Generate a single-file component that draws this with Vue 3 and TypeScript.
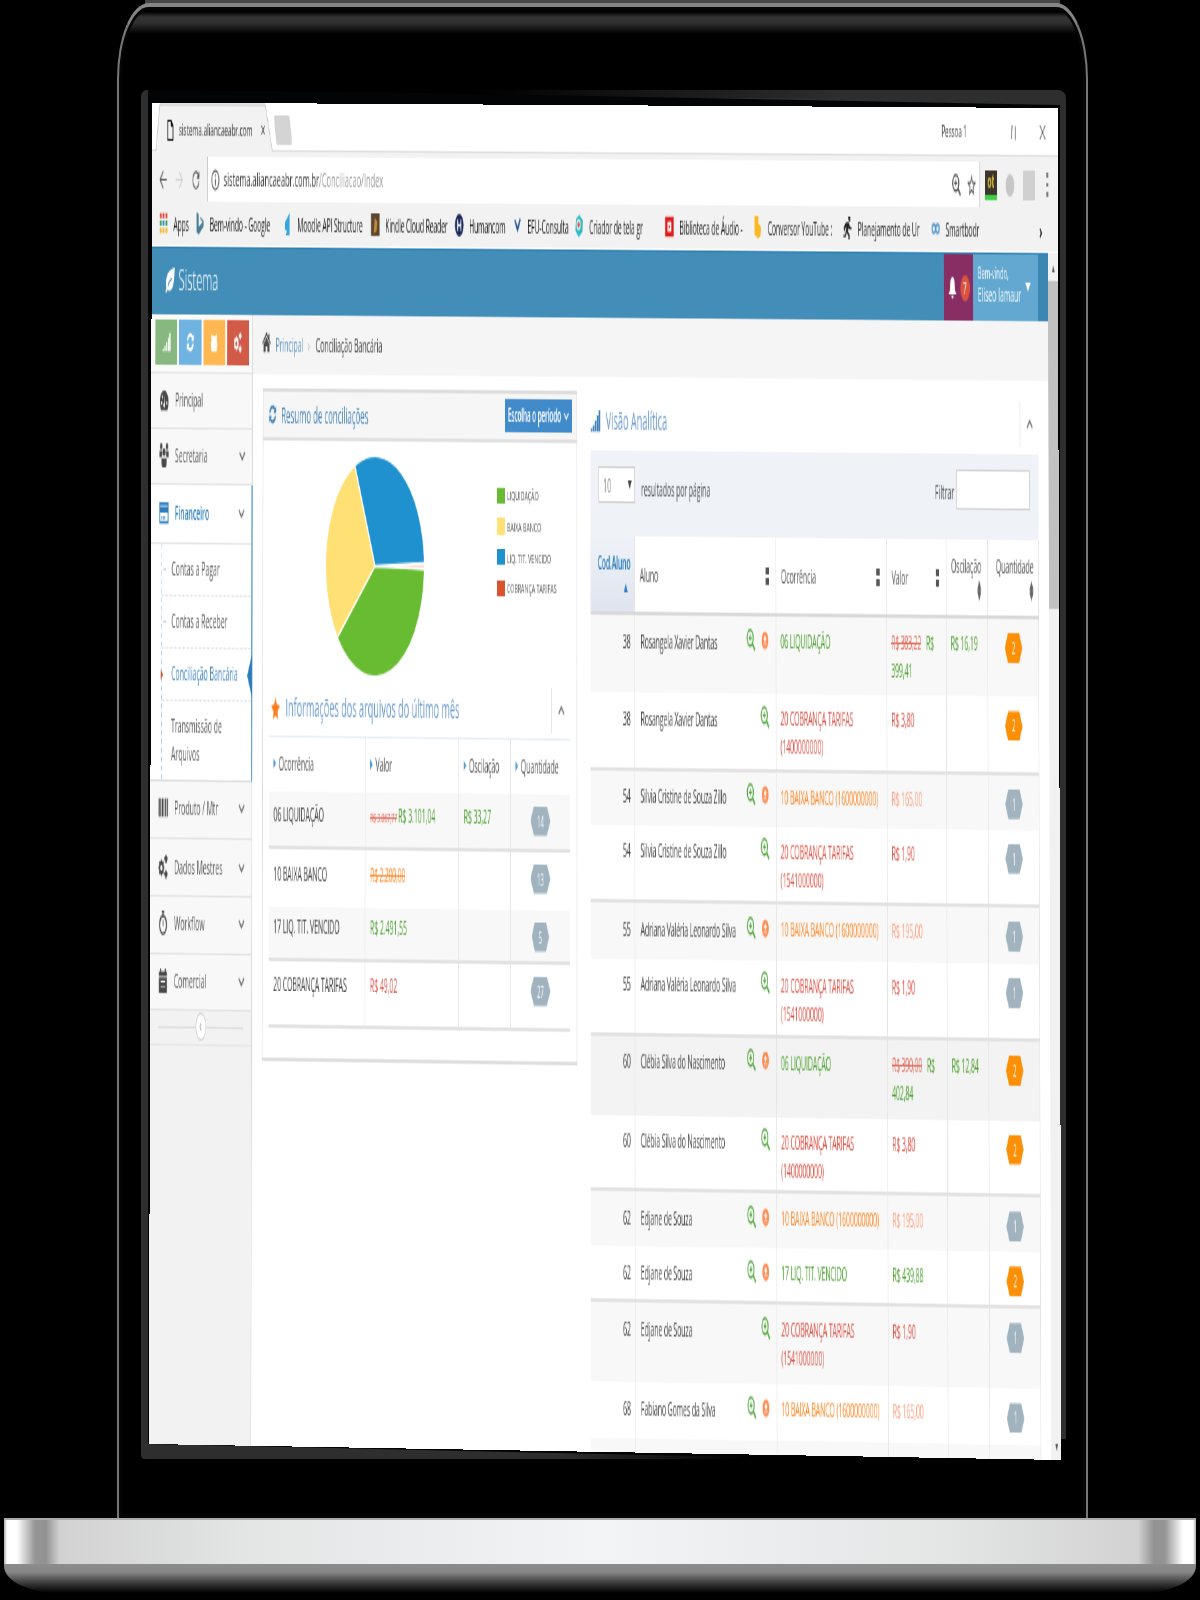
<script setup lang="ts">
interface MenuItem { icon: string; label: string; height: number; arrow: boolean }
interface Row {
  code: string; name: string; both: boolean; tone: string; text: string
  old?: string; value: string; diff?: string; qty: number; h: number; bg: string; line?: boolean
}

const icons: Record<string, string> = {
  leaf: 'M15 1C8 2 3 4 2 9c-.3 2 0 3 .6 4L1 15l1 .8L4 14c5 1.500 9-1 10-6 .5-2 .8-5 1-7zM4.500 11C6 9 8 7.500 11 7v1C8.500 8.500 6.500 10 5 12z',
  home: 'M8 1 0 8.500l1.200 1L8 3.500l6.800 6 1.200-1-2.500-2.300V2h-2v2.300zM2.500 9.500V15H6.500v-4h3v4h4V9.500L8 4.700z',
  dash: 'M8 2a7.500 7.500 0 0 0-7.500 7.500c0 2 .8 4 2 5.500h11c1.200-1.500 2-3.500 2-5.500A7.500 7.500 0 0 0 8 2zM3.500 11.500a1.200 1.200 0 1 1 0-2.400 1.200 1.200 0 0 1 0 2.400zm1.500-4a1.200 1.200 0 1 1 0-2.400 1.200 1.200 0 0 1 0 2.400zM8 13.500a1.700 1.700 0 0 1-.6-3.200L8 5l.8 5.300A1.700 1.700 0 0 1 8 13.500zm4.500-2a1.200 1.200 0 1 1 0-2.400 1.200 1.200 0 0 1 0 2.400z',
  group: 'M8 3.500a2.600 2.600 0 1 1 0 5.200 2.600 2.600 0 0 1 0-5.200zM3 0a2.200 2.200 0 1 1 0 4.400A2.200 2.200 0 0 1 3 0zm10 0a2.200 2.200 0 1 1 0 4.400A2.200 2.200 0 0 1 13 0zM0 5h4.500v3L3.500 9.500H0zm11.500 0H16v4.500h-3.500L11.500 8zM3.500 10h9v4l-1.500 2H5l-1.500-2z',
  card: 'M0 1h16v14H0zM1.500 3v1h13V3zM1.500 8v5.500h13V8zM3 10.500h2v1.500H3zm3 0h4v1.500H6z',
  bars: 'M0 2h2v12H0zM3 2h1v12H3zM5 2h3v12H5zM9 2h1v12H9zM11 2h2v12h-2zM14 2h2v12h-2z',
  gears: 'M4 3h2l.4 1.700 1.500-.7 1.400 1.500-.8 1.500 1.500.5v2l-1.600.5.8 1.500-1.400 1.400-1.500-.7L6 14H4l-.5-1.700-1.600.8L.500 11.600l.8-1.500L0 9.500v-2L1.300 7 .6 5.500 2 4l1.500.7zM5 6.500a2 2 0 1 0 0 4 2 2 0 0 0 0-4zM12 0h1.500l.4 1.200 1.600.3v2l-1.400.8-.5 1.400H12l-.5-1.400L10 3.500v-2l1.600-.3zM12 10h1.500l.4 1.200 1.600.3v2l-1.400.8-.5 1.400H12l-.5-1.400-1.500-.8v-2l1.600-.3z',
  clock: 'M6 0h4v1.500H9v1a6.700 6.700 0 1 1-2 0v-1H6zM8 4.300a5 5 0 1 0 0 10 5 5 0 0 0 0-10zM7.300 6h1.500v4H7.300z',
  calendar: 'M3 0h2v2h6V0h2v2h2v3H1V2h2zM1 6h14v10H1zM4 8v1h8V8zm0 4v.600h8v-.600z',
  signal: 'M0 13h2.500v2H0zM3.500 11H6v4H3.500zM7 8h2.500v7H7zM10.500 4.500H13V15h-2.500zM13.500 1H16v14h-2.500z',
  refresh: 'M8 1c2 0 4 .8 5.200 2.200L15 1.500V7H9.500l2-2A5 5 0 0 0 3.400 7H1.200A7 7 0 0 1 8 1zM1 9h5.500l-2 2a5 5 0 0 0 8-2h2.300A7 7 0 0 1 2.800 12.800L1 14.500z',
  cube: 'M3 1l2 2h6l2-2 1 3-1 2 2 3-2 6H3L1 9l2-3-1-2z',
  star: 'M8 0l2.400 5.300 5.600.7-4.200 4L13 16l-5-3-5 3 1.200-6L0 6l5.600-.7z',
  bell: 'M8 1c2.500.5 3.800 2.500 4 5l.5 4 2 2.500h-13l2-2.500L4 6c.2-2.500 1.500-4.500 4-5zM6 13.500h4a2 2 0 0 1-4 0z',
  zoom: 'M6.500 0a6.500 6.500 0 0 1 5.300 10.200L16 14.500 14.500 16l-4.200-4.200A6.500 6.500 0 1 1 6.500 0zm0 1.800a4.700 4.700 0 1 0 0 9.400 4.700 4.700 0 0 0 0-9.400zM5.800 4h1.500v1.800H9v1.500H7.300V9H5.800V7.300H4V5.800h1.800z',
  eye: 'M8 2a6.200 6.200 0 1 1 0 12.400A6.200 6.200 0 0 1 8 2zm0 2.200L4.800 7.800h2v1.500h2.400V7.800h2zM5 10.500v1h6v-1z',
  file: 'M2 0h8l4 4v12H2zm1.300 1.300v13.400h9.400V5H9V1.300z',
  back: 'M8 1.500 1.500 8 8 14.500l1-1L4.200 8.700H15V7.300H4.200L9 2.500z',
  forward: 'M8 1.500 14.500 8 8 14.500l-1-1 4.800-4.800H1V7.300h10.800L7 2.500z',
  reload: 'M8 1.500c1.800 0 3.500.8 4.700 2L14.500 1.800V7H9.300l2.300-2.300a5 5 0 1 0 1.300 4.300h1.600A6.500 6.500 0 1 1 8 1.500z',
  info: 'M8 .5a7.500 7.500 0 1 1 0 15 7.500 7.500 0 0 1 0-15zM8 2a6 6 0 1 0 0 12A6 6 0 0 0 8 2zM7.200 4h1.600v1.600H7.200zm0 3h1.600v5H7.200z',
  fav: 'M8 0l2.200 5.500 5.800.4-4.500 3.800L13 15.500l-5-3.200-5 3.200 1.500-5.800L0 5.900l5.800-.4zM8 3.500 6.700 6.800l-3.200.3L6 9.200l-.8 3L8 10.500l2.800 1.700-.8-3 2.500-2.100-3.200-.3z',
  runner: 'M9 0h4v3.500H10zM5 4h5l2 3 3 .5v1.500h-4L9.500 8 8.500 10.500l3 2V16H9.500v-2.500L6 11.500 4 14.500H0V13h3L6 7 3 8.500V10H1V7z',
}

const shortcuts = [
  { icon: 'signal', cls: 'green' }, { icon: 'refresh', cls: 'sky' },
  { icon: 'cube', cls: 'amber' }, { icon: 'gears', cls: 'brick' },
]
const menuTop: MenuItem[] = [
  { icon: 'dash', label: 'Principal', height: 32, arrow: false },
  { icon: 'group', label: 'Secretaria', height: 32, arrow: true },
]
const menuBottom: MenuItem[] = [
  { icon: 'bars', label: 'Produto / Mtr', height: 33.5, arrow: true },
  { icon: 'gears', label: 'Dados Mestres', height: 33, arrow: true },
  { icon: 'clock', label: 'Workflow', height: 32.5, arrow: true },
  { icon: 'calendar', label: 'Comercial', height: 32, arrow: true },
]
const bookmarks = [
  { k: 'apps', t: 'Apps', w: 55 }, { k: 'bing', t: 'Bem-vindo - Google', w: 133 },
  { k: 'moodle', t: 'Moodle API Structure', w: 133 }, { k: 'kindle', t: 'Kindle Cloud Reader', w: 127 },
  { k: 'hh', t: 'Humancom', w: 88 }, { k: 'vv', t: 'EFU-Consulta', w: 93 },
  { k: 'teal', t: 'Criador de tela gr', w: 136 }, { k: 'yt', t: 'Biblioteca de Áudio -', w: 133 },
  { k: 'hand', t: 'Conversor YouTube :', w: 135 }, { k: 'run', t: 'Planejamento de Ur', w: 132 },
  { k: 'oo', t: 'Smartbodr', w: 100 },
]
const legend = [
  { c: 'lg', t: 'LIQUIDAÇÃO' }, { c: 'ly', t: 'BAIXA BANCO' },
  { c: 'lb', t: 'LIQ. TIT. VENCIDO' }, { c: 'lr', t: 'COBRANÇA TARIFAS' },
]
const summary = [
  { t: '06 LIQUIDAÇÃO', old: 'R$ 3.067,77', v: 'R$ 3.101,04', tone: 'ok', d: 'R$ 33,27', q: 14, cls: 'r1' },
  { t: '10 BAIXA BANCO', old: '', v: 'R$ 2.200,00', tone: 'warn cut', d: '', q: 13, cls: 'r2' },
  { t: '17 LIQ. TIT. VENCIDO', old: '', v: 'R$ 2.491,55', tone: 'ok', d: '', q: 5, cls: 'r3' },
  { t: '20 COBRANÇA TARIFAS', old: '', v: 'R$ 49,02', tone: 'bad', d: '', q: 27, cls: 'r4' },
]
const rows: Row[] = [
  { code: '38', name: 'Rosangela Xavier Dantas', both: true, tone: 'ok', text: '06 LIQUIDAÇÃO', old: 'R$ 383,22', value: 'R$ 399,41', diff: 'R$ 16,19', qty: 2, h: 44.4, bg: 'g1' },
  { code: '38', name: 'Rosangela Xavier Dantas', both: false, tone: 'bad', text: '20 COBRANÇA TARIFAS (1400000000)', value: 'R$ 3,80', qty: 2, h: 44.3, bg: '', line: true },
  { code: '54', name: 'Silvia Cristine de Souza Zillo', both: true, tone: 'warn', text: '10 BAIXA BANCO (1600000000)', value: 'R$ 165,00', qty: 1, h: 31.1, bg: 'g1' },
  { code: '54', name: 'Silvia Cristine de Souza Zillo', both: false, tone: 'bad', text: '20 COBRANÇA TARIFAS (1541000000)', value: 'R$ 1,90', qty: 1, h: 44.3, bg: '', line: true },
  { code: '55', name: 'Adriana Valéria Leonardo Silva', both: true, tone: 'warn', text: '10 BAIXA BANCO (1600000000)', value: 'R$ 195,00', qty: 1, h: 31.8, bg: 'g1' },
  { code: '55', name: 'Adriana Valéria Leonardo Silva', both: false, tone: 'bad', text: '20 COBRANÇA TARIFAS (1541000000)', value: 'R$ 1,90', qty: 1, h: 44.1, bg: '', line: true },
  { code: '60', name: 'Clébia Silva do Nascimento', both: true, tone: 'ok', text: '06 LIQUIDAÇÃO', old: 'R$ 390,00', value: 'R$ 402,84', diff: 'R$ 12,84', qty: 2, h: 44.6, bg: 'g2' },
  { code: '60', name: 'Clébia Silva do Nascimento', both: false, tone: 'bad', text: '20 COBRANÇA TARIFAS (1400000000)', value: 'R$ 3,80', qty: 2, h: 43.6, bg: '', line: true },
  { code: '62', name: 'Edjane de Souza', both: true, tone: 'warn', text: '10 BAIXA BANCO (1600000000)', value: 'R$ 195,00', qty: 1, h: 31, bg: 'g1' },
  { code: '62', name: 'Edjane de Souza', both: true, tone: 'ok', text: '17 LIQ. TIT. VENCIDO', value: 'R$ 439,88', qty: 2, h: 32.1, bg: '', line: true },
  { code: '62', name: 'Edjane de Souza', both: false, tone: 'bad', text: '20 COBRANÇA TARIFAS (1541000000)', value: 'R$ 1,90', qty: 1, h: 45.2, bg: 'g1' },
  { code: '68', name: 'Fabiano Gomes da Silva', both: true, tone: 'warn', text: '10 BAIXA BANCO (1600000000)', value: 'R$ 165,00', qty: 1, h: 32, bg: '' },
]
</script>

<template>
  <div class="stage">
    <div class="lid">
      <div class="lid-edge"></div>
      <div class="bezel"></div>
      <div class="gap"></div>
      <div class="screen">
        <div class="tabs">
          <svg class="tab-shape" viewBox="0 0 184 28"><path d="M6 28 12 1H172L183 28" fill="#f2f2f2" stroke="#c4c4c4" stroke-width="1" /></svg>
          <div class="tab">
            <svg class="i12" viewBox="0 0 16 16"><path :d="icons.file" /></svg>
            <span class="tab-title">sistema.aliancaeabr.com</span>
            <span class="x">×</span>
          </div>
          <div class="newtab"></div>
          <span class="person">Pessoa 1</span>
          <svg class="win" viewBox="0 0 10 10"><path d="M2.500 1 1.500 9M7 1.500v8" stroke="#555" stroke-width="1.200" fill="none" /></svg>
          <svg class="win" viewBox="0 0 10 10"><path d="M1 1l8 8M9 1 1 9" stroke="#333" stroke-width="1" fill="none" /></svg>
        </div>
        <div class="addr">
          <svg class="i14" viewBox="0 0 16 16"><path :d="icons.back" /></svg>
          <svg class="i14 dim" viewBox="0 0 16 16"><path :d="icons.forward" /></svg>
          <svg class="i14" viewBox="0 0 16 16"><path :d="icons.reload" /></svg>
          <div class="url">
            <svg class="i13" viewBox="0 0 16 16"><path :d="icons.info" /></svg>
            <span class="url-text">sistema.aliancaeabr.com.br<em>/Conciliacao/Index</em></span>
            <svg class="i13" viewBox="0 0 16 16"><path :d="icons.zoom" /></svg>
            <svg class="i14" viewBox="0 0 16 16"><path :d="icons.fav" /></svg>
          </div>
          <span class="ext e1">ot</span><span class="ext e2"></span><span class="ext e3"></span>
          <span class="dots"><i></i><i></i><i></i></span>
        </div>
        <div class="marks">
          <div v-for="b in bookmarks" :key="b.t" class="mark" :style="{ width: b.w + 'px' }">
            <svg class="i14" viewBox="0 0 16 16">
              <template v-if="b.k === 'apps'">
                <path d="M1 1h3.500v3.500H1zM6.200 1h3.500v3.500H6.200zM11.500 1H15v3.500h-3.500z" fill="#e2473c" />
                <path d="M1 6.200h3.500v3.500H1zM11.500 6.200H15v3.500h-3.500z" fill="#35a553" /><path d="M6.200 6.200h3.500v3.500H6.200z" fill="#3d7de0" />
                <path d="M1 11.500h3.500V15H1zM6.200 11.500h3.500V15H6.200zM11.500 11.500H15V15h-3.500z" fill="#f2b92c" />
              </template>
              <path v-else-if="b.k === 'bing'" d="M2 0l4 1.500v9L13 7 9 5 8 3l7 3v4l-9 6-4-2z" fill="#4a7d93" />
              <path v-else-if="b.k === 'moodle'" d="M12 0v16H5l2-3-4-1V7z" fill="#35a5de" />
              <template v-else-if="b.k === 'kindle'"><path d="M0 0h16v16H0z" fill="#5b4630" /><path d="M7 3l5 3-2 7-5 1z" fill="#c58a35" /></template>
              <template v-else-if="b.k === 'hh'"><circle cx="8" cy="8" r="8" fill="#1d2a5b" /><path d="M5 4v8M11 4v8M5 8h6" stroke="#fff" stroke-width="1.800" /></template>
              <path v-else-if="b.k === 'vv'" d="M3 4l5 7 5-8" stroke="#2a5a97" stroke-width="2.500" fill="none" />
              <template v-else-if="b.k === 'teal'"><path d="M8 0l7 4-1 8-7 4-6-5 1-8z" fill="#2fb9c4" /><circle cx="7" cy="7" r="3.800" fill="#e9eef0" /><circle cx="7" cy="7" r="2.200" fill="#d9534f" /></template>
              <template v-else-if="b.k === 'yt'"><path d="M0 1h16v14H0z" fill="#dd1c1c" /><path d="M4.500 4.500h7v7h-7z" fill="#fff" /><path d="M6.500 6l3 2-3 2z" fill="#dd1c1c" /></template>
              <path v-else-if="b.k === 'hand'" d="M2 0h7v5l5 3-1 6-5 2-6-3z" fill="#fbb823" />
              <path v-else-if="b.k === 'run'" :d="icons.runner" fill="#222" />
              <g v-else fill="none" stroke="#5a9bd0" stroke-width="2"><circle cx="4.500" cy="8" r="3" /><circle cx="11.500" cy="8" r="3" /></g>
            </svg>
            <span>{{ b.t }}</span>
          </div>
          <span class="more">›</span>
        </div>

        <div class="page">
          <div class="content">
            <header class="nav">
              <svg class="leaf" viewBox="0 0 16 16"><path :d="icons.leaf" fill="#fff" /></svg>
              <span class="brand">Sistema</span>
              <div class="alerts">
                <svg class="i16" viewBox="0 0 16 16"><path :d="icons.bell" fill="#fff" /></svg>
                <b>7</b>
              </div>
              <div class="user"><div><small>Bem-vindo,</small><span>Eliseo Iamaur</span></div><i></i></div>
              <div class="nav-end"></div>
            </header>
            <div class="body">
              <aside class="side">
                <div class="shortcuts">
                  <span v-for="s in shortcuts" :key="s.cls" :class="s.cls"><svg class="i12" viewBox="0 0 16 16"><path :d="icons[s.icon]" fill="#fff" /></svg></span>
                </div>
                <div v-for="m in menuTop" :key="m.label" class="item" :style="{ height: m.height + 'px' }">
                  <svg class="i15" viewBox="0 0 16 16"><path :d="icons[m.icon]" /></svg><span>{{ m.label }}</span>
                  <svg v-if="m.arrow" class="chev" viewBox="0 0 10 6"><path d="M1 1l4 4 4-4" /></svg>
                </div>
                <div class="open">
                  <div class="item active">
                    <svg class="i15" viewBox="0 0 16 16"><path :d="icons.card" /></svg><span>Financeiro</span>
                    <svg class="chev" viewBox="0 0 10 6"><path d="M1 1l4 4 4-4" /></svg>
                  </div>
                  <div class="subs">
                    <div class="sub">Contas a Pagar</div>
                    <div class="sub">Contas a Receber</div>
                    <div class="sub cur">Conciliação Bancária<i></i></div>
                    <div class="sub tall">Transmissão de<br />Arquivos</div>
                  </div>
                </div>
                <div v-for="m in menuBottom" :key="m.label" class="item" :style="{ height: m.height + 'px' }">
                  <svg class="i15" viewBox="0 0 16 16"><path :d="icons[m.icon]" /></svg><span>{{ m.label }}</span>
                  <svg class="chev" viewBox="0 0 10 6"><path d="M1 1l4 4 4-4" /></svg>
                </div>
                <div class="collapse"><hr /><span>‹</span><hr /></div>
              </aside>
              <main>
                <div class="crumbs">
                  <svg class="i13" viewBox="0 0 16 16"><path :d="icons.home" /></svg>
                  <a>Principal</a><em>›</em><span>Conciliação Bancária</span>
                </div>
                <div class="cols">
                  <section class="panel">
                    <div class="phead">
                      <svg class="i12" viewBox="0 0 16 16"><path :d="icons.refresh" fill="#4a88b8" /></svg>
                      <span>Resumo de conciliações</span>
                      <button>Escolha o período <svg viewBox="0 0 10 6"><path d="M1 1l4 4 4-4" /></svg></button>
                    </div>
                    <div class="chart">
                      <svg class="pie" viewBox="-1 -1 2 2" preserveAspectRatio="none">
                        <path d="M0 0 1 .03A1 1 0 0 1-.76.65z" fill="#68bc31" />
                        <path d="M0 0-.76.65A1 1 0 0 1-.41-.912z" fill="#fee074" />
                        <path d="M0 0-.41-.912A1 1 0 0 1 .999-.035z" fill="#2091cf" />
                        <path d="M0 0 .999-.03 1 .02z" fill="#f4d9d0" />
                        <path d="M0 0 1 .02M0 0-.76.65M0 0-.41-.912M0 0 1-.03" stroke="#fff" stroke-width=".025" />
                      </svg>
                      <div class="legend"><div v-for="l in legend" :key="l.c"><i :class="l.c"></i>{{ l.t }}</div></div>
                    </div>
                    <div class="inner">
                      <div class="ihead">
                        <svg class="i14" viewBox="0 0 16 16"><path :d="icons.star" fill="#ff7b1c" /></svg>
                        <span>Informações dos arquivos do último mês</span>
                        <div class="toggle"><svg class="chev" viewBox="0 0 10 6"><path d="M1 5l4-4 4 4" /></svg></div>
                      </div>
                      <div class="sgrid shead">
                        <span>Ocorrência</span><span>Valor</span><span>Oscilação</span><span>Quantidade</span>
                      </div>
                      <div v-for="s in summary" :key="s.t" class="sgrid" :class="s.cls">
                        <span>{{ s.t }}</span>
                        <span :class="s.tone"><s v-if="s.old">{{ s.old }}</s><u>{{ s.v }}</u></span>
                        <span class="ok">{{ s.d }}</span>
                        <span class="mid"><b class="hex" :class="{ slim: s.q < 10 }">{{ s.q }}</b></span>
                      </div>
                    </div>
                  </section>

                  <section class="right">
                    <div class="rhead">
                      <svg class="i15" viewBox="0 0 16 16"><path :d="icons.signal" fill="#3f7fbb" /></svg>
                      <span>Visão Analítica</span>
                      <div class="toggle"><svg class="chev" viewBox="0 0 10 6"><path d="M1 5l4-4 4 4" /></svg></div>
                    </div>
                    <div class="filter">
                      <div class="select">10<i></i></div>
                      <span>resultados por página</span>
                      <label>Filtrar</label><div class="input"></div>
                    </div>
                    <div class="tgrid thead">
                      <div class="sorted">Cod.Aluno<i class="up"></i></div>
                      <div class="one">Aluno<i class="both"></i></div>
                      <div class="one">Ocorrência<i class="both"></i></div>
                      <div class="one">Valor<i class="both"></i></div>
                      <div class="two">Oscilação<i class="both"></i></div>
                      <div class="two">Quantidade<i class="both"></i></div>
                    </div>
                    <div v-for="(r, n) in rows" :key="n" class="tgrid row" :class="[r.bg, { line: r.line }]" :style="{ height: r.h + 'px' }">
                      <div class="code">{{ r.code }}</div>
                      <div class="name"><span>{{ r.name }}</span>
                        <svg class="i14" viewBox="0 0 16 16"><path :d="icons.zoom" fill="#57a944" /></svg>
                        <svg v-if="r.both" class="i14" viewBox="0 0 16 16"><path :d="icons.eye" fill="#ff8b4f" /></svg>
                      </div>
                      <div :class="r.tone">{{ r.text }}</div>
                      <div v-if="r.old" class="ok paid">
                        <div><s>{{ r.old }}</s><span>{{ r.value.split(' ')[0] }}</span></div>
                        <div>{{ r.value.split(' ')[1] }}</div>
                      </div>
                      <div v-else :class="[r.tone, { faint: r.tone === 'warn' }]">{{ r.value }}</div>
                      <div class="ok">{{ r.diff }}</div>
                      <div class="qty"><b class="hex slim" :class="{ hot: r.qty > 1 }">{{ r.qty }}</b></div>
                    </div>
                    <div class="tgrid row g1 last"><div v-for="n in 6" :key="n"></div></div>
                  </section>
                </div>
              </main>
            </div>
          </div>
          <div class="scroll"><span>▴</span><div></div><span class="down">▾</span></div>
        </div>
      </div>
    </div>
    <div class="base"></div>
    <div class="foot"></div>
  </div>
</template>

<style>
body { background: #000; overflow: hidden; }
</style>

<style scoped>
* { box-sizing: border-box; }
.stage { width: 1200px; height: 1600px; background: #000; overflow: hidden; position: relative; font-family: "Open Sans", "Noto Sans", sans-serif; }
.lid { height: 1518px; position: relative; }
.lid-edge { position: absolute; left: 117px; top: 3px; width: 971px; height: 1515px; border: 2px solid #777; border-top: 4px solid #858585; border-bottom: 0; border-radius: 32px 32px 0 0 / 76px 76px 0 0; background: linear-gradient(#000 0, #000 5px, #333 10px, #303030 16px, #000 27px); box-shadow: inset 0 0 0 3px #050505; }
.lid::before { content: ""; position: absolute; left: 145px; top: 0; width: 915px; height: 4px; background: #464646; }
.bezel { position: absolute; left: 140.500px; top: 90px; width: 925px; height: 1369px; border-radius: 6px 8px 4px 4px; background: linear-gradient(90deg, transparent 45%, #000 66%) bottom / 100% 20px no-repeat, linear-gradient(90deg, #000 0, #000 35%, transparent 75%) 8px 0 / 100% 8px no-repeat, #2e2e2e; }
.gap { position: absolute; left: 148px; top: 90px; width: 912px; height: 1366px; background: #020406; clip-path: polygon(0 0, 25% 2px, 60% 8px, 100% 15px, 100% 100%, 60% 100%, 0 1354px); }
.screen { position: absolute; left: 0; top: 0; width: 1366px; height: 768px; overflow: hidden; background: #fff; transform-origin: 0 0; transform: matrix3d(0.656942, 0.0034195, 0, -0.0000056193, -0.005388, 1.732384, 0, -0.0000099448, 0, 0, 1, 0, 152, 102.5, 0, 1); display: flex; flex-direction: column; color: #444; font-size: 10.500px; line-height: 16px; white-space: nowrap; }
svg { flex: none; display: block; }
.i12 { width: 12px; height: 12px; } .i13 { width: 13px; height: 13px; } .i14 { width: 14px; height: 13px; } .i15 { width: 15px; height: 14px; } .i16 { width: 14px; height: 14px; }
.tabs { height: 28px; display: flex; align-items: center; border-bottom: 1.500px solid #dedede; position: relative; flex: none; }
.tab-shape { position: absolute; left: 0; top: 0; width: 184px; height: 28px; }
.tab { position: relative; width: 184px; padding: 4px 12px 0 22px; display: flex; align-items: center; gap: 7px; color: #333; font-size: 9.700px; }
.tab-title { flex: 1; overflow: hidden; }
.x { font-size: 12px; }
.newtab { width: 24px; height: 17px; background: #d4d4d4; transform: skewX(14deg); margin: 3px 0 0 3px; border-radius: 2px; }
.person { margin-left: auto; font-size: 9.300px; width: 103px; color: #333; }
.win { width: 11px; height: 10px; margin-right: 32px; }
.win + .win { margin-right: 17px; }
.addr { height: 32px; background: #f2f2f2; display: flex; align-items: center; padding-left: 10px; gap: 11px; flex: none; }
.addr > svg, .addr .url svg { fill: #555; }
.addr .dim { fill: #d0d0d0; }
.url { margin-left: -1px; width: 1165px; height: 26px; background: #fff; border-left: 1px solid #ccc; border-right: 1px solid #ccc; display: flex; align-items: center; padding: 0 4px 0 5px; gap: 9px; font-size: 11.300px; color: #333; }
.url-text { flex: 1; margin-left: -3px; }
.url em { font-style: normal; color: #999; }
.ext { width: 18px; height: 17px; flex: none; }
.e1 { background: #3b362c; border-bottom: 3px solid #3fd04a; color: #d8b93c; font-size: 10px; line-height: 13px; text-align: center; font-weight: 700; margin-left: -3px; }
.e2 { width: 13px; height: 13px; border-radius: 50%; background: #c6c6c6; margin-left: 2px; }
.e3 { width: 18px; background: #d0d0d0; margin-left: 2px; }
.dots { display: grid; gap: 3px; margin-left: 6px; }
.dots i { width: 3px; height: 2.500px; background: #777; }
.marks { height: 23px; background: #f2f2f2; display: flex; align-items: center; padding: 0 0 3px 11px; border-bottom: 1px solid #fff; flex: none; color: #222; font-size: 10.200px; letter-spacing: -.1px; }
.mark { display: flex; align-items: center; gap: 8px; overflow: hidden; flex: none; }
.more { margin-left: 62px; font-size: 13px; font-weight: 700; }
.page { flex: 1; display: flex; min-height: 0; }
.content { width: 1351px; display: flex; flex-direction: column; }
.nav { height: 39px; flex: none; background: #438eb9; border-top: 1.500px solid #2f7fb0; display: flex; align-items: center; padding-left: 20px; color: #fff; }
.leaf { width: 16px; height: 16px; margin-bottom: 3px; }
.brand { font-size: 17px; font-weight: 300; margin: 0 0 3px 5px; flex: 1; }
.alerts { width: 44px; height: 39px; background: #892e65; display: flex; align-items: center; justify-content: center; gap: 5px; }
.alerts b { width: 14px; height: 15px; border-radius: 50%; background: #d9533f; font-size: 9px; line-height: 15px; text-align: center; font-weight: 400; }
.user { width: 97px; height: 39px; background: #62a8d1; display: flex; align-items: center; padding: 0 0 2px 7px; gap: 9px; }
.user div { display: flex; flex-direction: column; font-size: 10.300px; line-height: 13px; width: 62px; }
.user small { font-size: 8.700px; line-height: 11px; }
.user i { border: 4px solid transparent; border-top: 5px solid #fff; border-bottom: 0; }
.nav-end { width: 15px; height: 39px; background: #3c86b3; }
.body { flex: 1; display: flex; min-height: 0; }
.side { width: 154px; background: #f2f2f2; border-right: 1px solid #d8d8d8; flex: none; }
.shortcuts { height: 34px; background: #fafafa; display: flex; gap: 3px; padding: 3px 5px 4px 6px; border-bottom: 1px solid #e5e5e5; }
.shortcuts span { flex: 1; display: flex; align-items: center; justify-content: center; }
.green { background: #87b87f; } .sky { background: #6fb3e0; } .amber { background: #ffb752; } .brick { background: #d15b47; }
.item { display: flex; align-items: center; background: #f8f8f8; border-bottom: 1.500px solid #e3e3e3; padding: 0 10px 1px 12px; gap: 9px; color: #585858; }
.item span { flex: 1; }
.item > svg { fill: #4a4a4a; }
.item .chev, .chev { width: 10px; height: 6px; fill: none; stroke: #666; stroke-width: 1.300; }
.open { background: #fff; border-right: 2px solid #6aa5d5; margin-right: -1px; border-bottom: 1.500px solid #dcdcdc; }
.active { height: 33.500px; background: #fff; color: #2b7dbc; font-weight: 600; border-bottom: 1px solid #e4e4e4; padding-bottom: 0; font-size: 10.300px; }
.active > svg:first-child { fill: #2b7dbc; }
.subs { margin-left: 16px; border-left: 1px dashed #a9cbe6; }
.sub { height: 30px; padding: 6.500px 0 0 14px; border-bottom: 1px dotted #ddd; color: #555; position: relative; }
.sub::before { content: ""; position: absolute; left: 2px; top: 14px; width: 4px; border-top: 1px solid #b6d2e8; }
.cur { color: #3a82bb; }
.cur::before { border: 3px solid transparent; border-left: 4px solid #c86139; border-right: 0; left: -2px; top: 12px; width: 0; }
.cur i { position: absolute; right: -1px; top: 3px; border: 12px solid transparent; border-right: 7px solid #2b7dbc; border-left: 0; }
.tall { height: 45px; border-bottom: 0; padding-top: 6px; }
.tall::before { display: none; }
.collapse { height: 20px; border-bottom: 1px solid #e6e6e6; display: flex; align-items: center; padding: 0 12px; }
.collapse hr { flex: 1; border: 0; border-top: 1px solid #dcdcdc; }
.collapse span { width: 16px; height: 16px; border: 1px solid #ccc; border-radius: 50%; background: #fff; text-align: center; line-height: 12px; font-size: 11px; color: #999; }
main { flex: 1; min-width: 0; }
.crumbs { height: 34px; background: #f5f5f5; display: flex; align-items: center; padding: 0 0 1px 14px; font-size: 10.800px; letter-spacing: -.15px; }
.crumbs svg { fill: #4d4d4d; margin-bottom: 2px; }
.crumbs a { color: #5b95c2; margin-left: 7px; width: 46px; }
.crumbs em { font-style: normal; color: #bbb; width: 15px; padding-left: 3px; }
.cols { display: flex; padding: 8px 0 0 15px; align-items: flex-start; }
.panel { width: 475px; height: 385px; border: 1px solid #ddd; border-top: 2px solid #ddd; border-bottom: 2.500px solid #dedede; margin-right: 20px; }
.phead { height: 28px; background: #f6f6f6; border-bottom: 2px solid #e0e0e0; display: flex; align-items: center; padding: 0 7px 1px 8px; gap: 7px; color: #4a88b8; font-size: 11.900px; }
.phead span { flex: 1; }
.phead button { width: 101px; height: 19px; background: #428bca; color: #fff; border: 0; padding: 0; font: 600 9.800px/17px "Open Sans", sans-serif; letter-spacing: -.2px; display: flex; align-items: center; justify-content: center; gap: 3px; }
.phead button svg { width: 9px; height: 5px; fill: none; stroke: #fff; stroke-width: 1.500; }
.chart { height: 137px; display: flex; padding: 9px 0 0 95px; }
.pie { width: 148px; height: 125px; }
.legend { margin: 12.500px 0 0 110px; font-size: 8px; line-height: 18px; color: #555; }
.legend div { display: flex; align-items: center; gap: 3px; height: 17.700px; }
.legend i { width: 12px; height: 9.500px; }
.lg { background: #68bc31; } .ly { background: #fee074; } .lb { background: #2091cf; } .lr { background: #da5430; }
.inner { padding: 0 10px 0 9px; }
.ihead { height: 33px; border-bottom: 1.500px solid #e6eef5; display: flex; align-items: center; gap: 8px; color: #6c9bd0; font-size: 13.800px; padding-left: 3px; }
.ihead span { flex: 1; }
.toggle { height: 26px; width: 28px; border-left: 1px solid #ddd; display: flex; align-items: center; justify-content: center; }
.sgrid { display: grid; grid-template-columns: 146px 141px 78px 1fr; }
.sgrid > span { border-right: 1px solid #e6e6e6; padding: 4.500px 0 0 7px; letter-spacing: -.1px; }
.sgrid > span:last-child { border-right: 0; }
.sgrid u { text-decoration: none; }
.sgrid s { font-size: 8px; color: #e36c5c; margin-right: 2px; letter-spacing: -.25px; }
.sgrid .cut u { text-decoration: line-through; letter-spacing: -.35px; }
.shead { height: 31px; }
.shead > span { padding-top: 7px; color: #555; }
.shead > span::before { content: ""; display: inline-block; border: 3px solid transparent; border-left: 4px solid #4f9ad6; border-right: 0; margin: 0 4px 1px 0; }
.r1, .r3 { background: #f8f8f8; }
.r1 { height: 33px; border-bottom: 2.500px solid #e2e2e2; } .r2 { height: 33px; } .r3 { height: 31px; border-bottom: 2.500px solid #e2e2e2; }
.r2 > span { padding-top: 6px; }
.r3 > span { padding-top: 3px; }
.r4 { height: 38px; border-bottom: 2.500px solid #e2e2e2; }
.sgrid > .mid { display: flex; justify-content: center; padding: 6.500px 0 0; }
.hex { width: 30px; height: 17px; background: #a0b3bf; color: #fff; font-size: 9px; line-height: 17px; font-weight: 400; text-align: center; clip-path: polygon(18% 0, 82% 0, 100% 50%, 82% 100%, 18% 100%, 0 50%); }
.hex.slim { width: 26px; }
.hex.hot { background: #fb8f05; }
.ok { color: #4aa02c; } .warn { color: #ff8b2d; } .bad { color: #dd4f43; } .faint { color: #ffa07e; }
.right { width: 672px; }
.rhead { height: 34px; display: flex; align-items: center; gap: 8px; color: #6c9bd0; font-size: 13.800px; }
.rhead span { flex: 1; font-weight: 400; }
.filter { height: 49px; background: #eff3f8; display: flex; align-items: flex-start; padding: 9px 13px 0 12px; }
.filter > span { padding: 5px 0 0 9px; flex: 1; letter-spacing: -.15px; }
.filter label { padding: 5px 3px 0 0; }
.select { width: 55px; height: 21px; background: #fff; border: 1px solid #ccc; padding-left: 6px; line-height: 20px; color: #888; display: flex; justify-content: space-between; align-items: center; }
.select i { border: 3px solid transparent; border-top: 5px solid #444; border-bottom: 0; margin-right: 4px; }
.input { width: 110px; height: 23px; background: #fff; border: 1px solid #d3d3d3; }
.tgrid { display: grid; grid-template-columns: 67px 212px 166px 89px 62px 76px; }
.tgrid > div { border-right: 1px solid #e4e4e4; white-space: normal; }
.thead { height: 45px; border-bottom: 2.500px solid #d9d9d9; color: #555; letter-spacing: -.15px; }
.thead > div { display: flex; white-space: nowrap; }
.thead .sorted { background: linear-gradient(#eff3f8, #dfe4ee); color: #2b7dbc; flex-direction: column; align-items: flex-end; padding: 6.500px 6px 0 0; gap: 4px; font-weight: 600; font-size: 10.200px; }
.up { border: 3px solid transparent; border-bottom: 5px solid #307ecc; border-top: 0; margin-right: 4px; }
.one { justify-content: space-between; align-items: center; padding: 0 10px 0 7px; }
.two { flex-direction: column; align-items: flex-end; padding: 7px 9px 0 0; }
.thead .two:last-child { padding-right: 7px; }
.both { width: 6px; height: 10px; background: linear-gradient(#555, #555) 1px 0 / 5px 4px no-repeat, linear-gradient(#555, #555) 1px 6px / 5px 4px no-repeat; }
.two .both { width: 6px; height: 12px; background: #666; clip-path: polygon(50% 0, 100% 45%, 65% 50%, 100% 55%, 50% 100%, 0 55%, 35% 50%, 0 45%); }
.row > div { padding: 6px 0 0 6px; letter-spacing: -.2px; }
.row > .code { padding: 6.500px 6px 0 0; text-align: right; }
.row > .name { display: flex; justify-content: flex-end; gap: 7px; padding: 6.500px 9px 0 8px; }
.name span { flex: 1; white-space: nowrap; }
.paid { white-space: nowrap; }
.paid > div:first-child { display: flex; justify-content: space-between; padding-right: 19px; letter-spacing: -.35px; white-space: nowrap; }
.tgrid > .paid > div:first-child { padding-right: 18px; }
.row > .qty { display: flex; padding: 8px 0 0 25px; }
.row s { color: #e36c5c; }
.g1 { background: #f8f8f8; } .g2 { background: #f3f3f3; }
.line { border-bottom: 2.500px solid #e2e2e2; }
.last { height: 20px; }
.scroll { width: 15px; background: #f1f1f1; display: flex; flex-direction: column; font-size: 8px; color: #555; text-align: center; }
.scroll div { height: 187px; background: #c1c1c1; }
.scroll .down { margin-top: auto; }
.base { margin: 0 4px; height: 46px; border-top: 2px solid #aaa; background: linear-gradient(90deg, #aaa 0, #fff 3px, #fff 13px, #959595 31px, #929292 42px, #d2d2d2 56px, #e4e5e5 250px, #f3f4f6 596px, #e4e5e5 942px, #d2d2d2 1134px, #929292 1150px, #959595 1161px, #fff 1179px, #fff 1189px, #aaa 1192px); }
.foot { margin: 0 4px; height: 30px; border-radius: 0 0 60px 60px / 0 0 28px 28px; background: linear-gradient(#8c8c8c, #888 8px, #333 20px, #000 29px); }
</style>
